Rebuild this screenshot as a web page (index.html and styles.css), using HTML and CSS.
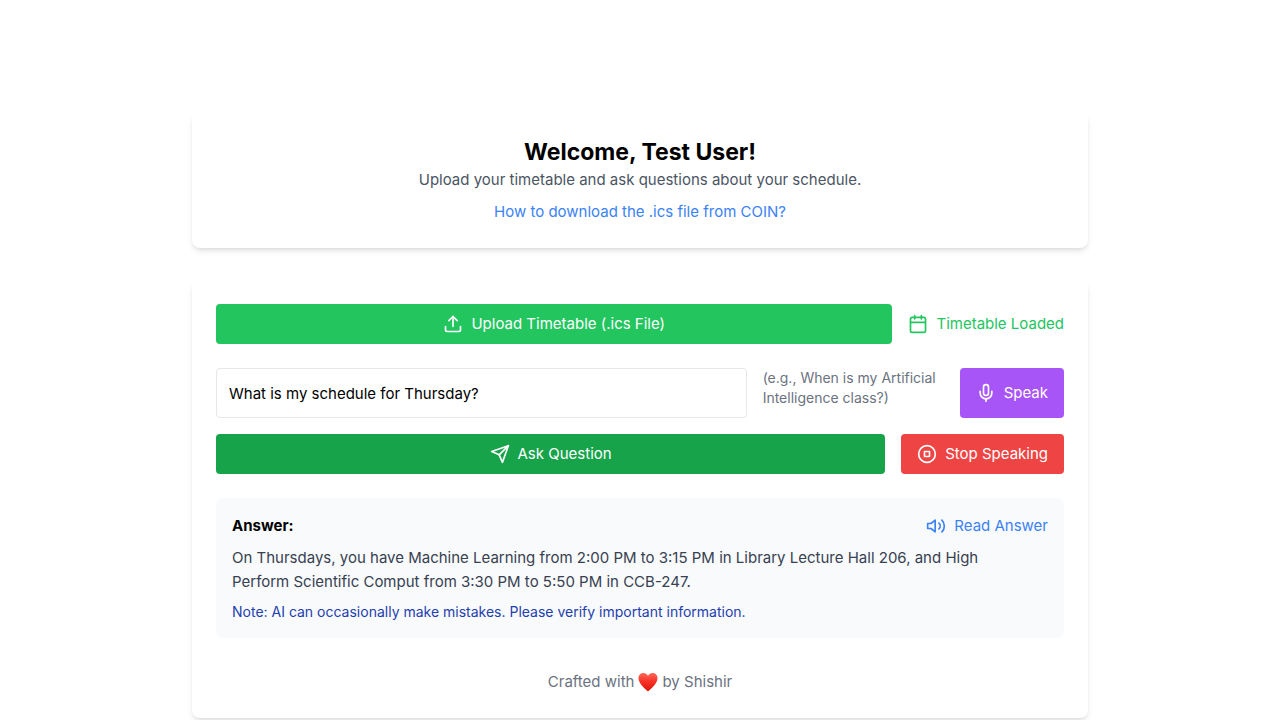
FILE: index.html
```html
<!DOCTYPE html>
<html lang="en">
<head>
<meta charset="utf-8">
<meta name="viewport" content="width=device-width, initial-scale=1">
<title>Timetable Assistant</title>
<link rel="stylesheet" href="styles.css">
</head>
<body>
<main class="page">
  <header class="card intro">
    <h1 class="title">Welcome, Test User!</h1>
    <p class="lead">Upload your timetable and ask questions about your schedule.</p>
    <a class="help-link" href="#help">How to download the .ics file from COIN?</a>
  </header>

  <section class="card">
    <div class="row upload-row">
      <button class="btn btn-upload" type="button">
        <svg class="icon" viewBox="0 0 24 24" aria-hidden="true"><path d="M21 15v4a2 2 0 0 1-2 2H5a2 2 0 0 1-2-2v-4"/><path d="M17 8l-5-5-5 5"/><path d="M12 3v12"/></svg>
        Upload Timetable (.ics File)
      </button>
      <span class="status">
        <svg class="icon" viewBox="0 0 24 24" aria-hidden="true"><rect x="3" y="4" width="18" height="18" rx="2"/><path d="M16 2v4M8 2v4M3 10h18"/></svg>
        Timetable Loaded
      </span>
    </div>

    <div class="row question-row">
      <input class="question" type="text" aria-label="Question" aria-describedby="hint" value="What is my schedule for Thursday?">
      <span class="hint" id="hint">(e.g., When is my Artificial Intelligence class?)</span>
      <button class="btn btn-speak" type="button">
        <svg class="icon" viewBox="0 0 24 24" aria-hidden="true"><path d="M12 2a3 3 0 0 0-3 3v7a3 3 0 0 0 6 0V5a3 3 0 0 0-3-3z"/><path d="M19 10v2a7 7 0 0 1-14 0v-2"/><path d="M12 19v3"/></svg>
        Speak
      </button>
    </div>

    <div class="row action-row">
      <button class="btn btn-ask" type="button">
        <svg class="icon" viewBox="0 0 24 24" aria-hidden="true"><path d="M22 2L11 13"/><path d="M22 2l-7 20-4-9-9-4 20-7z"/></svg>
        Ask Question
      </button>
      <button class="btn btn-stop" type="button">
        <svg class="icon" viewBox="0 0 24 24" aria-hidden="true"><circle cx="12" cy="12" r="10"/><rect x="9" y="9" width="6" height="6"/></svg>
        Stop Speaking
      </button>
    </div>

    <article class="answer">
      <div class="answer-head">
        <h2 class="answer-title">Answer:</h2>
        <button class="read" type="button">
          <svg class="icon" viewBox="0 0 24 24" aria-hidden="true"><path d="M11 5L6 9H2v6h4l5 4V5z"/><path d="M19.07 4.93a10 10 0 0 1 0 14.14M15.54 8.46a5 5 0 0 1 0 7.07"/></svg>
          Read Answer
        </button>
      </div>
      <p class="answer-text">On Thursdays, you have Machine Learning from 2:00 PM to 3:15 PM in Library Lecture Hall 206, and High Perform Scientific Comput from 3:30 PM to 5:50 PM in CCB-247.</p>
      <p class="note">Note: AI can occasionally make mistakes. Please verify important information.</p>
    </article>

    <footer class="credit">
      Crafted with
      <svg class="heart" viewBox="0 0 20 20" role="img" aria-label="love">
        <defs><linearGradient id="heart-fill" x1="0" y1="0" x2="0" y2="1"><stop offset="0" stop-color="#ff6a5c"/><stop offset="0.45" stop-color="#fa3127"/><stop offset="1" stop-color="#d91408"/></linearGradient></defs>
        <path fill="url(#heart-fill)" d="M10 19.500C7.500 17 .5 12 .5 6.300C.5 3 2.700 1 5.300 1C7.500 1 9.200 2.200 10 4C10.800 2.200 12.500 1 14.700 1C17.300 1 19.500 3 19.500 6.300C19.500 12 12.500 17 10 19.500Z"/>
      </svg>
      by Shishir
    </footer>
  </section>
</main>
</body>
</html>
```
FILE: styles.css
```css
*, *::before, *::after { box-sizing: border-box; }

body {
  margin: 0;
  min-height: 100vh;
  background: #fff;
  color: #000;
  font-family: Inter, "Liberation Sans", sans-serif;
  font-size: 15px;
  line-height: 24px;
}

h1, h2, p { margin: 0; }
button, input { font: inherit; }
button { border: 0; cursor: pointer; }

.page {
  display: flex;
  flex-direction: column;
  gap: 32px;
  max-width: 896px;
  margin: 0 auto;
  padding: 112px 0 2px;
}

.card {
  padding: 24px;
  border-radius: 8px;
  background: #fff;
  box-shadow: 0 4px 6px -1px rgb(0 0 0 / 0.1), 0 2px 4px -2px rgb(0 0 0 / 0.1);
}

.intro {
  display: flex;
  flex-direction: column;
  align-items: center;
  text-align: center;
}

.title { font-size: 23px; line-height: 32px; font-weight: 700; }
.lead { color: #4b5563; }
.help-link { margin-top: 8px; color: #3b82f6; text-decoration: none; }

.row { display: flex; gap: 16px; }
.upload-row { align-items: center; margin-bottom: 24px; }
.question-row { margin-bottom: 16px; }
.action-row { margin-bottom: 24px; }

.icon {
  flex: none;
  width: 20px;
  height: 20px;
  fill: none;
  stroke: currentColor;
  stroke-width: 2;
  stroke-linecap: round;
  stroke-linejoin: round;
}

.btn {
  display: flex;
  align-items: center;
  justify-content: center;
  gap: 8px;
  padding: 8px 16px;
  border-radius: 4px;
  color: #fff;
  white-space: nowrap;
}

.btn-upload { flex: 1; background: #22c55e; }
.btn-speak { background: #a855f7; }
.btn-ask { flex: 1; background: #16a34a; }
.btn-stop { background: #ef4444; }

.status {
  display: flex;
  align-items: center;
  gap: 8px;
  color: #22c55e;
  white-space: nowrap;
}

.question {
  flex: 1;
  min-width: 0;
  height: 50px;
  padding: 12px;
  border: 1px solid #e5e7eb;
  border-radius: 4px;
  background: #fff;
  color: #000;
}

.hint { width: 181px; color: #6b7280; font-size: 14px; line-height: 20px; }

.answer { padding: 16px; border-radius: 8px; background: #f9fafb; }
.answer-head { display: flex; align-items: center; justify-content: space-between; margin-bottom: 8px; }
.answer-title { font-size: 15px; line-height: 24px; font-weight: 700; }
.read { display: flex; align-items: center; gap: 8px; padding: 0; background: none; color: #3b82f6; }
.answer-text { padding-right: 24px; color: #374151; }
.note { margin-top: 8px; color: #1e40af; font-size: 14px; line-height: 20px; }

.credit {
  display: flex;
  align-items: center;
  justify-content: center;
  gap: 4px;
  margin-top: 32px;
  color: #6b7280;
}
.heart { width: 20px; height: 20px; }
```
